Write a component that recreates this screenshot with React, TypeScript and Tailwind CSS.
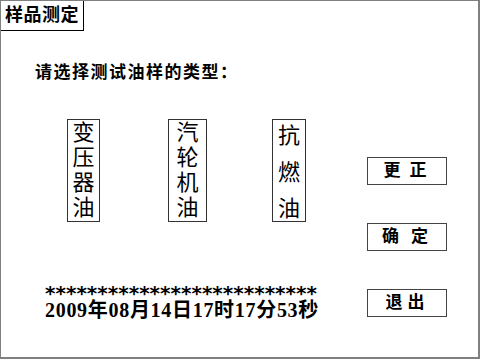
const FONT = '"Liberation Serif", "Noto Sans CJK SC", serif';

const oils = [
  { chars: ['变', '压', '器', '油'], width: 'w-[33px]', spread: false },
  { chars: ['汽', '轮', '机', '油'], width: 'w-[39px]', spread: false },
  { chars: ['抗', '燃', '油'], width: 'w-[34px]', spread: true },
];

const buttons = [
  { left: '更', right: '正', gap: 'gap-[9px]' },
  { left: '确', right: '定', gap: 'gap-[12px]' },
  { left: '退', right: '出', gap: 'gap-[5px]' },
];

function OilBox({ chars, width, spread }: { chars: string[]; width: string; spread: boolean }) {
  return (
    <div
      className={`${width} h-[103px] border border-[#333] flex flex-col items-center text-[22px] leading-[25px] ${
        spread ? 'justify-between pt-[3px]' : ''
      }`}
    >
      {chars.map((c, i) => (
        <span key={i}>{c}</span>
      ))}
    </div>
  );
}

export default function App(): React.ReactElement {
  return (
    <div
      className="w-[480px] h-[359px] bg-white text-black border-t border-l border-r-2 border-b-2 border-[#808080] flex flex-col overflow-hidden"
      style={{ fontFamily: FONT }}
    >
      <div className="-mt-px -ml-px w-[84px] h-[31px] border border-black flex items-center justify-center text-[18px] font-bold tracking-[0.5px]">
        样品测定
      </div>

      <div className="flex flex-1">
        <div className="flex-1 flex flex-col">
          <div className="mt-[32px] pl-[34px] text-[17px] leading-[20px] font-bold tracking-[1.5px]">
            请选择测试油样的类型：
          </div>

          <div className="mt-[36px] ml-[66px] flex">
            <OilBox {...oils[0]} />
            <div className="ml-[68px]">
              <OilBox {...oils[1]} />
            </div>
            <div className="ml-[65px]">
              <OilBox {...oils[2]} />
            </div>
          </div>

          <div className="mt-[66px] pl-[44px] font-bold">
            <div className="text-[20px] leading-[11px] font-['DejaVu_Sans',sans-serif]">**************************</div>
            <div className="text-[20px] leading-[22px] tracking-[0.7px]">2009年08月14日17时17分53秒</div>
          </div>
        </div>

        <div className="w-[80px] mr-[31px] mt-[126px] flex flex-col gap-[38px]">
          {buttons.map((b, i) => (
            <div
              key={i}
              className={`h-[28px] border border-[#444] flex items-center justify-center ${b.gap} text-[17px] font-bold pr-[4px]`}
            >
              <span>{b.left}</span>
              <span>{b.right}</span>
            </div>
          ))}
        </div>
      </div>
    </div>
  );
}
